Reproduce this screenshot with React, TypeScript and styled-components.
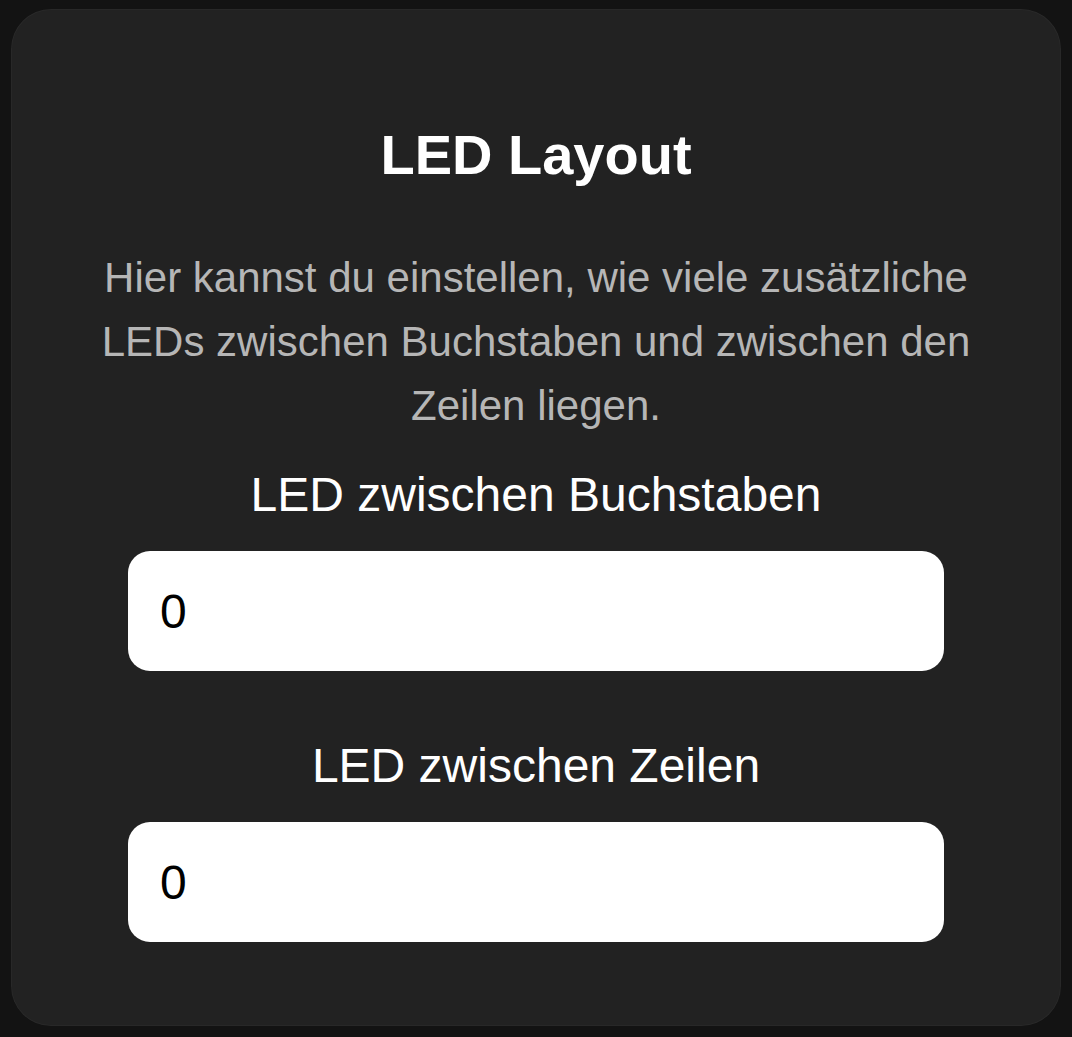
import React, { useState } from "react";
import styled, { createGlobalStyle } from "styled-components";

const GlobalStyle = createGlobalStyle`
  html, body {
    margin: 0;
    padding: 0;
    background: #131313;
    font-family: "Liberation Sans", Arial, Helvetica, sans-serif;
  }
  * {
    box-sizing: border-box;
  }
`;

const Page = styled.div`
  padding: 9px 11px 12px;
`;

const Card = styled.section`
  display: flex;
  flex-direction: column;
  align-items: center;
  width: 1050px;
  padding: 114px 0 84px;
  background: #222222;
  border-radius: 40px;
  box-shadow: inset 0 0 0 1px rgba(255, 255, 255, 0.03);
`;

const Title = styled.h1`
  margin: 0;
  font-size: 56px;
  line-height: 64px;
  font-weight: 700;
  color: #ffffff;
  text-align: center;
`;

const Description = styled.p`
  margin: 59px 0 0;
  max-width: 880px;
  font-size: 42px;
  line-height: 64px;
  color: #b6b6b6;
  text-align: center;
`;

const Field = styled.div<{ $gap: number }>`
  display: flex;
  flex-direction: column;
  align-items: center;
  row-gap: 28px;
  margin-top: ${(props) => props.$gap}px;
`;

const Label = styled.label`
  font-size: 48px;
  line-height: 56px;
  color: #ffffff;
  text-align: center;
`;

const Input = styled.input`
  width: 816px;
  height: 120px;
  padding: 0 32px;
  border: none;
  border-radius: 22px;
  background: #ffffff;
  color: #000000;
  font-family: inherit;
  font-size: 48px;
  outline: none;
`;

const App: React.FC = () => {
  const [letters, setLetters] = useState("0");
  const [rows, setRows] = useState("0");

  return (
    <>
      <GlobalStyle />
      <Page>
        <Card>
          <Title>LED Layout</Title>
          <Description>
            Hier kannst du einstellen, wie viele zusätzliche LEDs zwischen Buchstaben und zwischen
            den Zeilen liegen.
          </Description>
          <Field $gap={29}>
            <Label htmlFor="letters">LED zwischen Buchstaben</Label>
            <Input
              id="letters"
              type="number"
              value={letters}
              onChange={(e) => setLetters(e.target.value)}
            />
          </Field>
          <Field $gap={67}>
            <Label htmlFor="rows">LED zwischen Zeilen</Label>
            <Input id="rows" type="number" value={rows} onChange={(e) => setRows(e.target.value)} />
          </Field>
        </Card>
      </Page>
    </>
  );
};

export default App;
